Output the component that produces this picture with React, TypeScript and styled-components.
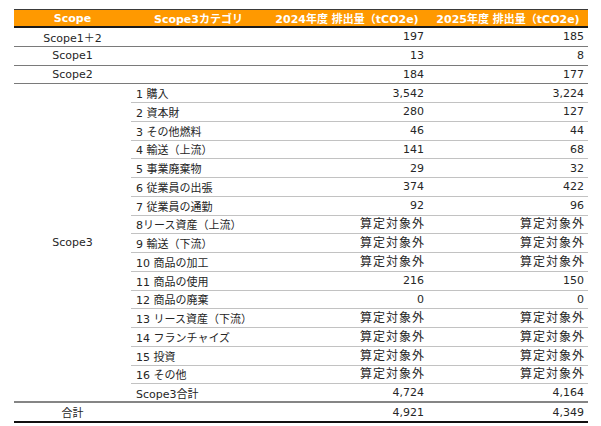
import React from "react";
import styled, { createGlobalStyle, css } from "styled-components";

const Global = createGlobalStyle`
  html, body { margin: 0; padding: 0; background: #ffffff; }
  body { font-family: "DejaVu Sans", "Noto Sans CJK JP", sans-serif; }
`;

const Page = styled.div`
  padding: 9px 13px 0 14px;
`;

const Table = styled.div`
  display: grid;
  grid-template-columns: 117px 135px 162px 160px;
  grid-template-rows: 18px repeat(20, 18.75px) 20px;
  border-top: 1px solid #3a3a3a;
  width: 574px;
  font-size: 11px;
  color: #262626;
  font-family: "DejaVu Sans", "Noto Sans CJK JP", sans-serif;
`;

const Head = styled.div`
  background: #ff9900;
  color: #ffffff;
  font-weight: bold;
  display: flex;
  align-items: center;
  justify-content: center;
  border-bottom: 2px solid #1a1a1a;
  white-space: nowrap;
`;

type Line = "main" | "sub" | "strong" | "end";
type Align = "left" | "center" | "right";

const lineCss = {
  main: css`border-bottom: 1px solid #7a7a7a;`,
  sub: css`border-bottom: 1px solid #c2c2c2;`,
  strong: css`border-bottom: 2px solid #858585;`,
  end: css`border-bottom: 2px solid #111111;`,
};

const Cell = styled.div<{ $align: Align; $line: Line; $span?: number }>`
  box-sizing: border-box;
  display: flex;
  align-items: center;
  white-space: nowrap;
  justify-content: ${(p) =>
    p.$align === "left" ? "flex-start" : p.$align === "right" ? "flex-end" : "center"};
  padding: ${(p) => (p.$align === "left" ? "0 0 0 5px" : p.$align === "right" ? "0 4px 0 0" : "0")};
  ${(p) => lineCss[p.$line]}
  ${(p) => (p.$span ? `grid-row: span ${p.$span};` : "")}
`;

const Excluded = styled.span`
  font-size: 12px;
  letter-spacing: 1px;
  margin-right: -1px;
  line-height: 1;
`;

const EX = "算定対象外";

const top: [string, string, string][] = [
  ["Scope1＋2", "197", "185"],
  ["Scope1", "13", "8"],
  ["Scope2", "184", "177"],
];

const cats: [string, string, string][] = [
  ["1 購入", "3,542", "3,224"],
  ["2 資本財", "280", "127"],
  ["3 その他燃料", "46", "44"],
  ["4 輸送（上流）", "141", "68"],
  ["5 事業廃棄物", "29", "32"],
  ["6 従業員の出張", "374", "422"],
  ["7 従業員の通勤", "92", "96"],
  ["8リース資産（上流）", EX, EX],
  ["9 輸送（下流）", EX, EX],
  ["10 商品の加工", EX, EX],
  ["11 商品の使用", "216", "150"],
  ["12 商品の廃棄", "0", "0"],
  ["13 リース資産（下流）", EX, EX],
  ["14 フランチャイズ", EX, EX],
  ["15 投資", EX, EX],
  ["16 その他", EX, EX],
  ["Scope3合計", "4,724", "4,164"],
];

const show = (v: string) => (v === EX ? <Excluded>{v}</Excluded> : v);

export default function App() {
  return (
    <Page>
      <Global />
      <Table>
        <Head>Scope</Head>
        <Head>Scope3カテゴリ</Head>
        <Head>2024年度 排出量（tCO2e)</Head>
        <Head>2025年度 排出量（tCO2e)</Head>

        {top.map(([s, a, b]) => (
          <React.Fragment key={s}>
            <Cell $align="center" $line="main">{s}</Cell>
            <Cell $align="left" $line="main" />
            <Cell $align="right" $line="main">{a}</Cell>
            <Cell $align="right" $line="main">{b}</Cell>
          </React.Fragment>
        ))}

        <Cell $align="center" $line="strong" $span={cats.length}>
          Scope3
        </Cell>
        {cats.map(([c, a, b], i) => {
          const line: Line = i === cats.length - 1 ? "strong" : "sub";
          return (
            <React.Fragment key={c}>
              <Cell $align="left" $line={line}>{c}</Cell>
              <Cell $align="right" $line={line}>{show(a)}</Cell>
              <Cell $align="right" $line={line}>{show(b)}</Cell>
            </React.Fragment>
          );
        })}

        <Cell $align="center" $line="end">合計</Cell>
        <Cell $align="left" $line="end" />
        <Cell $align="right" $line="end">4,921</Cell>
        <Cell $align="right" $line="end">4,349</Cell>
      </Table>
    </Page>
  );
}
